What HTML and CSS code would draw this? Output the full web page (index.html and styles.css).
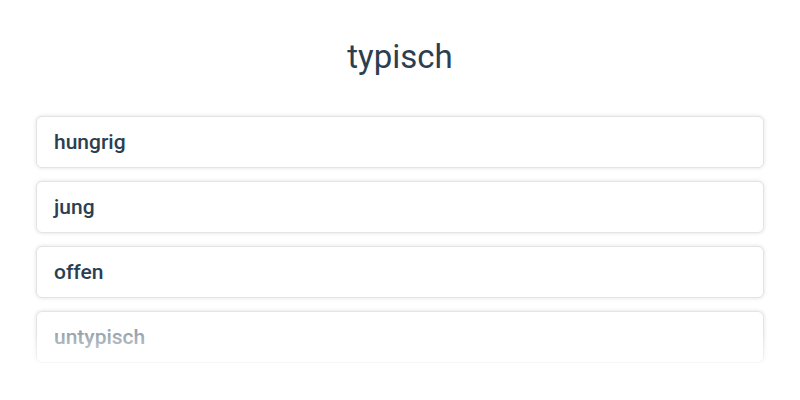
FILE: index.html
```html
<!DOCTYPE html>
<html lang="de">
<head>
<meta charset="utf-8">
<title>typisch</title>
<link rel="stylesheet" href="styles.css">
</head>
<body>
<main class="page">
  <h1 class="title">typisch</h1>
  <ul class="list">
    <li class="item">hungrig</li>
    <li class="item">jung</li>
    <li class="item">offen</li>
    <li class="item item-faded">untypisch</li>
  </ul>
</main>
</body>
</html>
```
FILE: styles.css
```css
html, body {
  margin: 0;
  padding: 0;
  background: #ffffff;
}
body {
  font-family: Roboto, "Liberation Sans", sans-serif;
  color: #2c3e50;
}
.page {
  padding: 38px 36px 0;
}
.title {
  margin: 0;
  font-size: 33px;
  font-weight: 400;
  line-height: 38.5px;
  text-align: center;
}
.list {
  list-style: none;
  margin: 39px 0 0;
  padding: 0;
  display: flex;
  flex-direction: column;
  gap: 13px;
}
.item {
  position: relative;
  border: 1px solid #e4e4e4;
  border-radius: 6px;
  box-shadow: 0 0 4px rgba(0, 0, 0, 0.12);
  padding: 13px 17px;
  font-size: 21px;
  font-weight: 500;
  line-height: 24px;
  background: #fff;
}
.item-faded {
  color: #95a0ab;
}
.item-faded::after {
  content: "";
  position: absolute;
  left: -6px;
  right: -6px;
  top: 40%;
  bottom: -8px;
  background: linear-gradient(to bottom, rgba(255, 255, 255, 0), rgba(255, 255, 255, 0.85));
  pointer-events: none;
}
```
